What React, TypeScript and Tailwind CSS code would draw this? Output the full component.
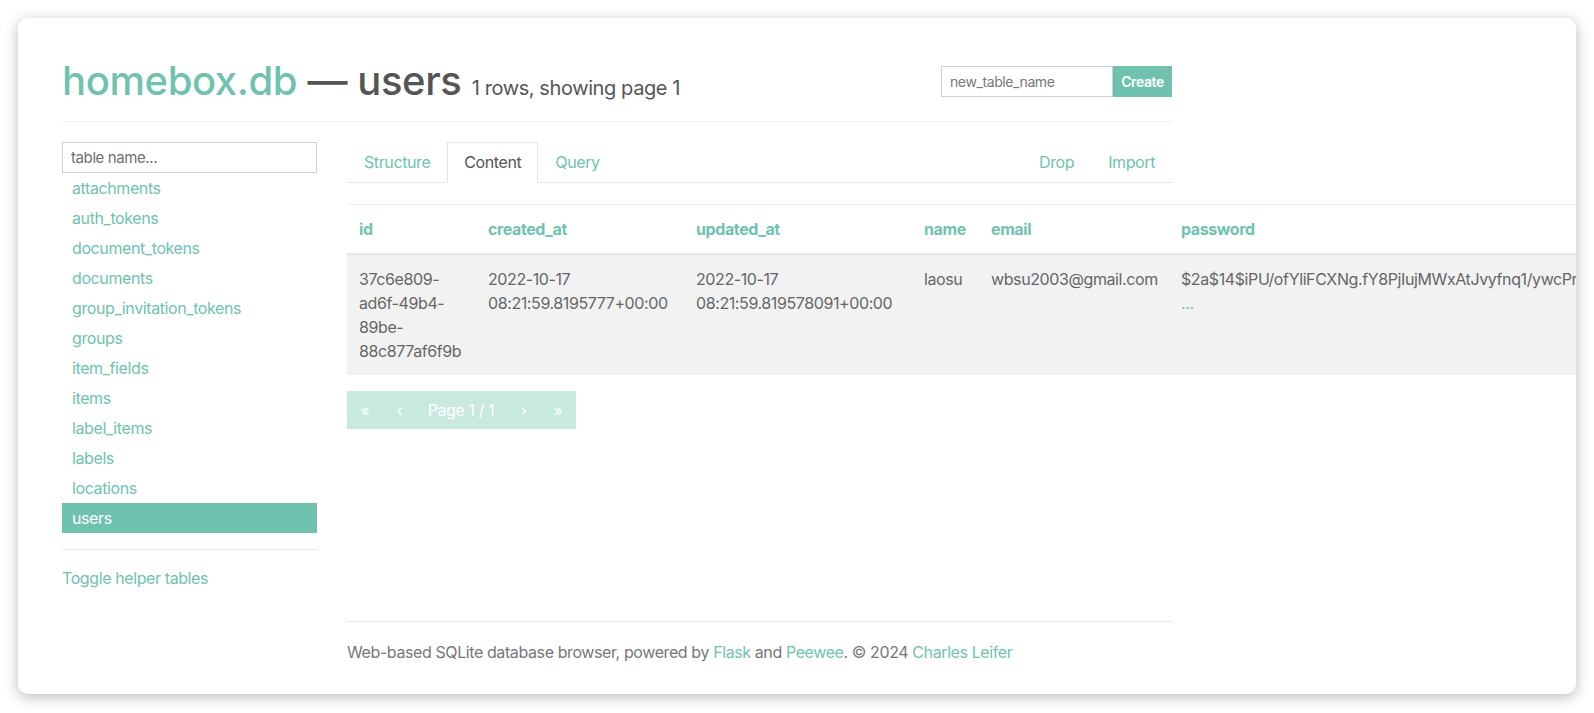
import React from 'react';

const tables = [
  'attachments',
  'auth_tokens',
  'document_tokens',
  'documents',
  'group_invitation_tokens',
  'groups',
  'item_fields',
  'items',
  'label_items',
  'labels',
  'locations',
  'users',
];

const Sidebar: React.FC = () => (
  <aside className="w-[255px] shrink-0">
    <input
      type="text"
      placeholder="table name..."
      className="block h-[31px] w-full border border-[#ccd1d9] px-[8px] text-[15px] text-[#555] outline-none placeholder:text-[#6f6f6f]"
    />
    <ul>
      {tables.map((t) =>
        t === 'users' ? (
          <li key={t} className="h-[30px] bg-[#6fc3ae] pl-[10px] text-[16px] leading-[30px] text-white">
            {t}
          </li>
        ) : (
          <li key={t} className="h-[30px] pl-[10px] text-[16px] leading-[30px] text-[#6fc3ae]">
            {t}
          </li>
        )
      )}
    </ul>
    <hr className="mt-[16px] border-t border-[#e8e8e8]" />
    <a className="mt-[16px] block text-[16px] leading-[24px] text-[#6fc3ae]">Toggle helper tables</a>
  </aside>
);

const Tabs: React.FC = () => (
  <nav className="flex border-b border-[#e3e6e9] text-[16px] leading-[24px]">
    <a className="border border-transparent px-[16px] py-[7px] text-[#6fc3ae]">Structure</a>
    <a className="-mb-px border border-[#e3e6e9] border-b-white bg-white px-[16px] py-[7px] text-[#555]">Content</a>
    <a className="border border-transparent px-[16px] py-[7px] text-[#6fc3ae]">Query</a>
    <a className="ml-auto border border-transparent px-[16px] py-[7px] text-[#6fc3ae]">Drop</a>
    <a className="border border-transparent px-[16px] py-[7px] text-[#6fc3ae]">Import</a>
  </nav>
);

const DataTable: React.FC = () => {
  const th = 'border-t border-b-2 border-t-[#eceef0] border-b-[#e6e8ea] p-[12px] text-left align-bottom font-bold leading-[24px] text-[#6fc3ae] whitespace-nowrap';
  const td = 'bg-[#f2f2f2] p-[12px] align-top leading-[24px] text-[#666]';
  return (
    <table className="mt-[21px] w-full table-fixed border-collapse text-[16px]">
      <thead>
        <tr>
          <th className={`${th} w-[129px]`}>id</th>
          <th className={`${th} w-[208px]`}>created_at</th>
          <th className={`${th} w-[228px]`}>updated_at</th>
          <th className={`${th} w-[67px]`}>name</th>
          <th className={`${th} w-[190px]`}>email</th>
          <th className={`${th} w-[520px]`}>password</th>
        </tr>
      </thead>
      <tbody>
        <tr>
          <td className={td}>37c6e809-ad6f-49b4-89be-88c877af6f9b</td>
          <td className={td}>2022-10-17 08:21:59.8195777+00:00</td>
          <td className={td}>2022-10-17 08:21:59.819578091+00:00</td>
          <td className={td}>laosu</td>
          <td className={`${td} whitespace-nowrap`}>wbsu2003@gmail.com</td>
          <td className={td}>
            <span className="whitespace-nowrap">$2a$14$iPU/ofYliFCXNg.fY8PjIujMWxAtJvyfnq1/ywcPrXw2hT0e9sQmK</span>
            <a className="block text-[#6fc3ae]">...</a>
          </td>
        </tr>
      </tbody>
    </table>
  );
};

const Pager: React.FC = () => (
  <div className="mt-[16px] inline-flex h-[38px] items-center bg-[#c8e9df] text-[16px] leading-[24px] text-white">
    <span className="w-[36px] text-center">«</span>
    <span className="w-[32px] text-center">‹</span>
    <span className="w-[92px] text-center">Page 1 / 1</span>
    <span className="w-[33px] text-center">›</span>
    <span className="w-[36px] text-center">»</span>
  </div>
);

export default function App() {
  return (
    <div className="h-[713px] overflow-hidden bg-white p-[18px] font-['Inter','Liberation_Sans',sans-serif] tracking-[-0.025em]">
      <div className="h-[676px] overflow-hidden rounded-[10px] bg-white shadow-[0_3px_14px_rgba(0,0,0,0.28)]">
        <div className="ml-[29px] w-[1140px] px-[15px] pt-[39px]">
          <header className="flex h-[48px] items-start justify-between">
            <h1 className="text-[40px] font-medium leading-[48px] text-[#555]">
              <a className="text-[#6fc3ae]">homebox.db</a> — users{' '}
              <small className="text-[20px] font-normal leading-none">1 rows, showing page 1</small>
            </h1>
            <form className="mt-[9px] flex">
              <input
                type="text"
                placeholder="new_table_name"
                className="h-[31px] w-[172px] border border-[#ccd1d9] px-[8px] text-[14px] outline-none placeholder:text-[#777]"
              />
              <button type="button" className="h-[31px] w-[59px] bg-[#6fc3ae] text-[14px] font-semibold text-white">
                Create
              </button>
            </form>
          </header>
          <hr className="mt-[16px] border-t border-[#efefef]" />
          <div className="mt-[20px] flex gap-[30px]">
            <Sidebar />
            <main className="w-[825px] shrink-0">
              <Tabs />
              <DataTable />
              <Pager />
            </main>
          </div>
          <footer className="ml-[285px] mt-[31px]">
            <hr className="border-t border-[#e8e8e8]" />
            <p className="mt-[18px] text-[16px] leading-[24px] text-[#777]">
              Web-based SQLite database browser, powered by <a className="text-[#6fc3ae]">Flask</a> and{' '}
              <a className="text-[#6fc3ae]">Peewee</a>. © 2024 <a className="text-[#6fc3ae]">Charles Leifer</a>
            </p>
          </footer>
        </div>
      </div>
    </div>
  );
}
